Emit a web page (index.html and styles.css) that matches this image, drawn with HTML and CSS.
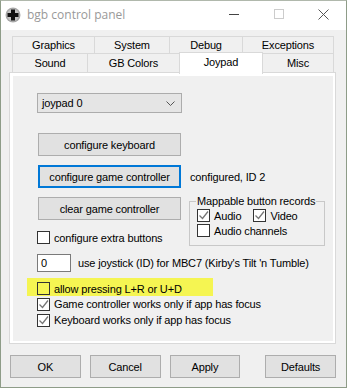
FILE: index.html
```html
<html lang="en">
<head>
    <meta charset="UTF-8">
    <title>bgb control panel</title>
    <link rel="stylesheet" href="styles.css">
</head>
<body>
    <div class="window">
        <div class="titlebar">
            <svg class="app-icon" width="16" height="16" viewBox="0 0 16 16">
                <circle cx="8" cy="8" r="7.5" fill="#a8a8a8"/>
                <circle cx="8" cy="8" r="6" fill="#c4c4c4"/>
                <path d="M6 2.5h4v3.5h3.5v4h-3.5v3.5h-4v-3.5h-3.5v-4h3.5z" fill="#111"/>
            </svg>
            <span class="title">bgb control panel</span>
            <div class="caption">
                <span class="cap"><svg width="10" height="10" viewBox="0 0 10 10"><path d="M0 5.5h10" stroke="#444" stroke-width="1"/></svg></span>
                <span class="cap"><svg width="10" height="10" viewBox="0 0 10 10"><rect x="0.5" y="0.5" width="9" height="9" fill="none" stroke="#ccc"/></svg></span>
                <span class="cap"><svg width="11" height="11" viewBox="0 0 11 11"><path d="M0.5 0.5l10 10M10.5 0.5l-10 10" stroke="#555" stroke-width="1"/></svg></span>
            </div>
        </div>

        <div class="client">
            <div class="tabrow">
                <div class="tab w-graphics">Graphics</div>
                <div class="tab w-system">System</div>
                <div class="tab w-debug">Debug</div>
                <div class="tab w-exceptions">Exceptions</div>
            </div>
            <div class="tabrow second">
                <div class="tab w-sound">Sound</div>
                <div class="tab w-colors">GB Colors</div>
                <div class="tab w-joypad selected">Joypad</div>
                <div class="tab w-misc">Misc</div>
            </div>

            <div class="panel">
                <div class="page">
                    <div class="select">
                        <span>joypad 0</span>
                        <svg width="9" height="5" viewBox="0 0 9 5"><path d="M0.5 0.5l4 4 4-4" fill="none" stroke="#555"/></svg>
                    </div>

                    <div class="btn wide keyboard">configure keyboard</div>

                    <div class="row controller">
                        <div class="btn wide focused">configure game controller</div>
                        <span class="status">configured, ID 2</span>
                    </div>

                    <div class="row split">
                        <div class="left-col">
                            <div class="btn wide">clear game controller</div>
                            <label class="check extra"><span class="box"></span>configure extra buttons</label>
                        </div>
                        <fieldset class="group">
                            <legend>Mappable button records</legend>
                            <div class="group-line">
                                <label class="check"><span class="box on"></span>Audio</label>
                                <label class="check video"><span class="box on"></span>Video</label>
                            </div>
                            <label class="check"><span class="box"></span>Audio channels</label>
                        </fieldset>
                    </div>

                    <div class="row joystick">
                        <div class="edit">0</div>
                        <span>use joystick (ID) for MBC7 (Kirby's Tilt 'n Tumble)</span>
                    </div>

                    <div class="checks">
                        <label class="check marked"><span class="box"></span>allow pressing L+R or U+D</label>
                        <label class="check"><span class="box on"></span>Game controller works only if app has focus</label>
                        <label class="check"><span class="box on"></span>Keyboard works only if app has focus</label>
                    </div>
                </div>
            </div>

            <div class="buttons">
                <div class="btn">OK</div>
                <div class="btn">Cancel</div>
                <div class="btn">Apply</div>
                <div class="btn defaults">Defaults</div>
            </div>
        </div>
    </div>
</body>
</html>
```

FILE: styles.css
```css
/* dialog window */
* {
    box-sizing: border-box;
}

body {
    margin: 0;
    background-color: #f0f0f0;
    font-family: "Liberation Sans", Arial, sans-serif;
    font-size: 11px;
    letter-spacing: -0.15px;
    color: #000;
}

.window {
    width: 347px;
    height: 388px;
    border: 1px solid #8e9c88;
    border-top-color: #b0b8ac;
    background-color: #f0f0f0;
}

.titlebar {
    height: 29px;
    background-color: #fff;
    display: flex;
    align-items: center;
    padding-left: 4px;
}

.app-icon {
    margin-top: -2px;
}

.title {
    margin-left: 6px;
    margin-top: -3px;
    font-family: "Open Sans", "Noto Sans", sans-serif;
    font-size: 12px;
    letter-spacing: 0;
    color: #999;
}

.caption {
    margin-left: auto;
    display: flex;
    height: 100%;
}

.cap {
    width: 45px;
    display: flex;
    align-items: center;
    justify-content: center;
    margin-top: -3px;
}

.client {
    padding: 6px 10px 0 8px;
}

/* tabs */
.tabrow {
    display: flex;
    height: 18px;
    margin-left: 3px;
    align-items: flex-start;
}

.tabrow.second {
    height: 20px;
    margin-top: -1px;
}

.tab {
    height: 100%;
    margin-right: -1px;
    border: 1px solid #d9d9d9;
    background-color: #f0f0f0;
    display: flex;
    align-items: center;
    justify-content: center;
    padding-bottom: 1px;
}

.tab.selected {
    position: relative;
    z-index: 2;
    height: 22px;
    margin-top: -1px;
    border-bottom: none;
    background-color: #fff;
    padding-bottom: 3px;
}

.w-graphics { width: 83px; }
.w-system { width: 76px; }
.w-debug { width: 74px; }
.w-exceptions { width: 92px; }
.w-sound { width: 76px; }
.w-colors { width: 93px; }
.w-joypad { width: 84px; }
.w-misc { width: 72px; }

.panel {
    position: relative;
    z-index: 1;
    margin-top: -1px;
    height: 272px;
    border: 1px solid #d9d9d9;
    background-color: #fff;
    padding: 3px 2px 2px 3px;
}

.page {
    height: 100%;
    background-color: #f0f0f0;
    padding-top: 17px;
    padding-left: 24px;
}

/* controls */
.select {
    width: 145px;
    height: 20px;
    border: 1px solid #acacac;
    background-color: #e5e5e5;
    display: flex;
    align-items: center;
    justify-content: space-between;
    padding: 0 6px 0 4px;
}

.btn {
    height: 23px;
    width: 71px;
    border: 1px solid #adadad;
    background-color: #e1e1e1;
    display: flex;
    align-items: center;
    justify-content: center;
}

.btn.wide {
    width: 143px;
    margin-left: 1px;
}

.btn.focused {
    border: 2px solid #0078d7;
}

.keyboard {
    margin-top: 20px;
}

.row {
    display: flex;
    align-items: center;
}

.controller {
    margin-top: 9px;
}

.status {
    margin-left: 9px;
}

.split {
    margin-top: 9px;
    align-items: flex-start;
}

.left-col {
    width: 152px;
}

.check {
    display: flex;
    align-items: center;
    height: 13px;
}

.box {
    width: 13px;
    height: 13px;
    border: 1px solid #333;
    background-color: #fff;
    margin-right: 4px;
    flex: none;
}

.box.on {
    background-image: url("data:image/svg+xml,%3Csvg xmlns='http://www.w3.org/2000/svg' width='11' height='11' viewBox='0 0 11 11'%3E%3Cpath d='M1.5 5.5l3 3 5.5-7' fill='none' stroke='%23777' stroke-width='1.3'/%3E%3C/svg%3E");
    background-repeat: no-repeat;
}

.extra {
    margin-top: 11px;
}

.group {
    margin: 0;
    margin-top: -1px;
    width: 136px;
    height: 50px;
    border: 1px solid #c8c8c8;
    padding: 0 0 0 7px;
}

.group legend {
    padding: 0 1px;
    margin-left: -1px;
    line-height: 11px;
}

.group-line {
    display: flex;
    margin-top: 2px;
    margin-bottom: 2px;
}

.check.video {
    margin-left: 12px;
}

.joystick {
    margin-top: 8px;
}

.edit {
    width: 34px;
    height: 18px;
    border: 1px solid #7a7a7a;
    background-color: #fff;
    padding-left: 3px;
    display: flex;
    align-items: center;
    margin-right: 7px;
}

.checks {
    margin-top: 6px;
}

.checks .check {
    height: 16px;
}

.check.marked {
    margin-left: -10px;
    width: 186px;
    height: 18px;
    padding-left: 10px;
    padding-top: 3px;
    background-color: #f5f552;
    margin-bottom: 0;
}

.check.marked .box {
    background-color: transparent;
}

.buttons {
    display: flex;
    gap: 9px;
    margin-top: 11px;
    margin-left: 1px;
}

.btn.defaults {
    margin-left: 16px;
}
```
